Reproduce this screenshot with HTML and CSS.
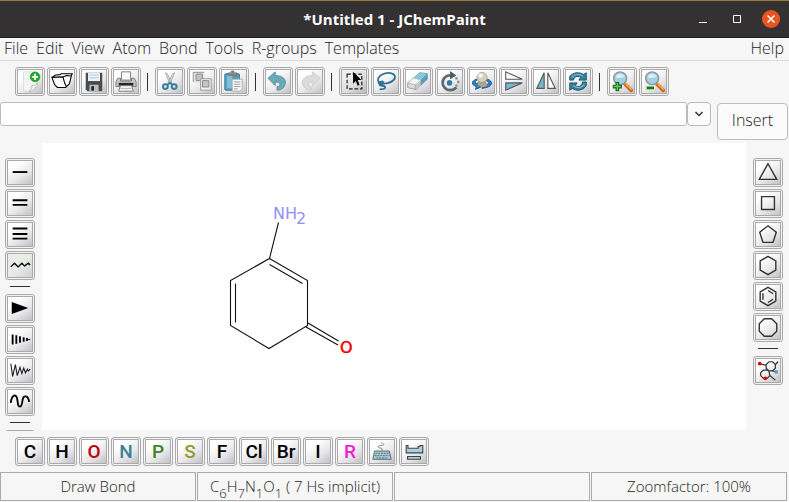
FILE: index.html
```
<!DOCTYPE html>
<html lang="en">
<head>
<meta charset="utf-8">
<title>*Untitled 1 - JChemPaint</title>
<link rel="stylesheet" href="styles.css">
</head>
<body>
<header class="titlebar">
  <h1 class="title">*Untitled 1 - JChemPaint</h1>
  <div class="window-controls">
    <button class="win" aria-label="Minimize"><svg width="18" height="18"><path d="M5 12.500h8" stroke="#fff"/></svg></button>
    <button class="win" aria-label="Maximize"><svg width="18" height="18"><path d="M5.500 5.500h7v7h-7z" stroke="#fff" fill="none"/></svg></button>
    <button class="win close" aria-label="Close"><svg width="18" height="18"><path d="M5.500 5.500l7 7m0-7l-7 7" stroke="#fff" stroke-width="1.500"/></svg></button>
  </div>
</header>
<nav class="menubar">
  <button>File</button><button>Edit</button><button>View</button><button>Atom</button><button>Bond</button><button>Tools</button><button>R-groups</button><button>Templates</button><button class="help">Help</button>
</nav>
<div class="toolbar">
  <button class="tool" aria-label="New"><svg viewBox="0 0 26 25"><path d="M6 2h14v16l-5 5H6z" fill="#f4f4f4" stroke="#ddd"/><path d="M21 14v3l-6 6h-3c3-1 3-3 3-6 3 1 5-1 6-3z" fill="#fff" stroke="#999" stroke-width=".7"/><circle cx="18.500" cy="7.500" r="5.300" fill="#1fae1f" stroke="#0d870d" stroke-width=".6"/><path d="M18.500 4.200v6.600M15.200 7.500h6.600" stroke="#fff" stroke-width="2"/></svg></button>
  <button class="tool" aria-label="Open"><svg viewBox="0 0 26 25"><path d="M2 8l4-2.500 5-.500 1-1h12l-1 3-2 8-4 4H8l-3-3L2 8l12-.500 2 7 2 4M14 7.500L18 6l5 .500" fill="#fff" stroke="#000" stroke-width="1.200"/></svg></button>
  <button class="tool" aria-label="Save"><svg viewBox="0 0 26 25"><path d="M4 3h18v20H6l-2-2z" fill="#484b50"/><path d="M6.500 3h13v9h-13z" fill="#eaf2f8"/><path d="M8 5.500h10M8 8.500h10" stroke="#b5c9d8"/><path d="M8 16h10v7H8z" fill="#bbb"/><path d="M10 17.500h3v5h-3z" fill="#26282b"/></svg></button>
  <button class="tool" aria-label="Print"><svg viewBox="0 0 26 25"><path d="M8 2h10v9H8z" fill="#fafafa" stroke="#777"/><path d="M4 9h3v3h12V9h3l2 4v5H2v-5z" fill="#c7c7c7" stroke="#777"/><path d="M5 14h16v3H5z" fill="#252525"/><path d="M7 17h12l2 6H5z" fill="#f7f7f7" stroke="#777"/><path d="M7 20h12" stroke="#aaa"/></svg></button>
  <span class="divider"></span>
  <button class="tool" aria-label="Cut"><svg viewBox="0 0 26 25"><path d="M8 3l2 1 5 10-2 1zM18 3l-2 1-5 10 2 1z" fill="#e4e4df" stroke="#999b92" stroke-width=".8"/><g fill="none" stroke="#347f9e" stroke-width="2.200"><circle cx="8" cy="18" r="2.600"/><circle cx="17.500" cy="18" r="2.600"/><path d="M10 16l3-2 3 2"/></g></svg></button>
  <button class="tool" aria-label="Copy"><svg viewBox="0 0 26 25"><path d="M4 2h12v12H4z" fill="#e8e8e8"/><path d="M3.500 13V2.500H15" fill="none" stroke="#888"/><path d="M6.500 4.500h7v7h-7z" fill="#c4c4c4" stroke="#888"/><path d="M11.500 9.500H23V22H11.500z" fill="#eee" stroke="#999"/><path d="M13.500 11.500h7v7h-7z" fill="#c4c4c4" stroke="#888"/></svg></button>
  <button class="tool" aria-label="Paste"><svg viewBox="0 0 26 25"><rect x="3" y="4" width="16" height="18" rx="1" fill="#559bbb" stroke="#377b9c"/><path d="M5 6h6v14H5z" fill="#83bed8"/><path d="M7 6V3h3V1h3v2h3v3z" fill="#8d8982" stroke="#666" stroke-width=".6"/><path d="M11 10h11v10l-3 3h-8z" fill="#f8f8f8" stroke="#aaa"/><path d="M13 13h7M13 15.500h7M13 18h7M13 20.500h4" stroke="#999"/></svg></button>
  <span class="divider"></span>
  <button class="tool" aria-label="Undo"><svg viewBox="0 0 26 25"><path d="M2 9l8-7v4c8 0 12 4 11 9-1 4-4 7-9 7v-4c4 0 5-5-2-5v4z" fill="#66abb9" stroke="#648c94"/></svg></button>
  <button class="tool" aria-label="Redo"><svg viewBox="0 0 26 25"><path d="M24 9l-8-7v4c-8 0-12 4-11 9 1 4 4 7 9 7v-4c-4 0-5-5 2-5v4z" fill="#dcdcdc" stroke="#ccc"/></svg></button>
  <span class="divider"></span>
  <button class="tool active" aria-label="Select"><svg viewBox="0 0 26 25"><path d="M5.500 4.500h16v16h-16z" fill="none" stroke="#222" stroke-width="1.300" stroke-dasharray="4 2"/><path d="M12 2v13l3-3 2 5 2-1-2-5h4z" fill="#000"/></svg></button>
  <button class="tool" aria-label="Lasso"><svg viewBox="0 0 26 25"><g fill="none" stroke="#2e7196" stroke-width="2"><ellipse cx="13.500" cy="9" rx="9.500" ry="5.500" transform="rotate(-14 13.500 9)"/><path d="M5 12c-1 3 4 5 5 2 0-3-5-1-4 2 1 2 6 0 6 3 0 2-4 2-6 2"/></g></svg></button>
  <button class="tool" aria-label="Erase"><svg viewBox="0 0 26 25"><path d="M2 14L15 3l8 1v6L11 21l-9-2z" fill="#8fb8ca" stroke="#78909a"/><path d="M2 14l6-5 8 2-6 5z" fill="#f7f7f7"/><path d="M10 16l6-5v6l-5 4z" fill="#c7c9ca"/><path d="M2 14l8 2v5l-8-2z" fill="#dedede" stroke="#999" stroke-width=".6"/><path d="M8 9l7-6 8 1-7 7z" fill="#8cc6dc"/><path d="M16 11l7-7v6l-7 7z" fill="#5f9cb6"/></svg></button>
  <button class="tool" aria-label="Rotate"><svg viewBox="0 0 26 25"><path d="M15 6c-6-1-10 3-10 8 0 4 4 8 8 8 3 0 5-1 7-3" fill="none" stroke="#5e6e70" stroke-width="3"/><path d="M13 1l7 5-7 4z" fill="#4c5e61"/><circle cx="12.500" cy="14" r="3" fill="#337d9c"/><g fill="#899596"><circle cx="20" cy="9" r="1.500"/><circle cx="22" cy="13" r="1.500"/><circle cx="20" cy="17" r="1.500"/></g></svg></button>
  <button class="tool" aria-label="Rotate in 3D"><svg viewBox="0 0 26 25"><path d="M7 10c-6 2-6 6 0 8l-1 3 7-3-4-5-1 2c-3-1-3-3 0-4zM19 10c6 2 6 7-1 9l-5 1 2-4c6 0 7-3 3-4z" fill="#2b83c1" stroke="#164f7d"/><path d="M9 12h8l2 5-6 2-5-3z" fill="#b1a28c"/><circle cx="13" cy="8" r="5.500" fill="#d5cec1" stroke="#9c9383" stroke-width=".7"/><circle cx="11.500" cy="6" r="2.500" fill="#f8f5ed"/></svg></button>
  <button class="tool" aria-label="Flip vertically"><svg viewBox="0 0 26 25"><g stroke="#555" stroke-width="1.200"><path d="M4 2v8h18z" fill="#fff"/><path d="M4 14h18L4 22z" fill="#72bad0"/></g></svg></button>
  <button class="tool" aria-label="Flip horizontally"><svg viewBox="0 0 26 25"><g stroke="#555" stroke-width="1.200"><path d="M11 3v17H3z" fill="#72bad0"/><path d="M15 3v17h8z" fill="#fff"/></g></svg></button>
  <button class="tool" aria-label="Clean up"><svg viewBox="0 0 26 25"><path d="M4 11V7c4-5 11-5 15-2l3-2v8h-8l2-3c-4-2-7-1-8 3zM22 13v4c-4 6-11 6-15 3l-3 2v-8h8l-2 3c4 2 7 1 8-4z" fill="#397f9d" stroke="#185471"/><path d="M6 8c4-4 9-4 12-1M20 16c-4 4-9 4-12 1" fill="none" stroke="#83bacd" stroke-width="1.300"/></svg></button>
  <span class="divider"></span>
  <button class="tool" aria-label="Zoom in"><svg viewBox="0 0 26 25"><path d="M16 15l7 7" stroke="#d65c1d" stroke-width="4" stroke-linecap="round"/><path d="M16.500 14.500l7 7" stroke="#ffc04b" stroke-width="1.500"/><circle cx="11" cy="9" r="7" fill="#a7cfe8" stroke="#8d9396" stroke-width="1.500"/><path d="M6 8c1-5 9-5 10 0-3-1-6 2-10 0z" fill="#dceefa"/><path d="M8 13v10M3 18h10" stroke="#146b18" stroke-width="4"/><path d="M8 14v8M4 18h8" stroke="#68c864" stroke-width="1.500"/></svg></button>
  <button class="tool" aria-label="Zoom out"><svg viewBox="0 0 26 25"><path d="M16 15l7 7" stroke="#d65c1d" stroke-width="4" stroke-linecap="round"/><path d="M16.500 14.500l7 7" stroke="#ffc04b" stroke-width="1.500"/><circle cx="11" cy="9" r="7" fill="#a7cfe8" stroke="#8d9396" stroke-width="1.500"/><path d="M6 8c1-5 9-5 10 0-3-1-6 2-10 0z" fill="#dceefa"/><path d="M4 19.500h10" stroke="#d5f1cf" stroke-width="5"/><path d="M5 19.500h8" stroke="#187a1c" stroke-width="3"/></svg></button>
</div>
<form class="entry">
  <input class="entry-text" type="text" aria-label="Structure">
  <button class="entry-drop" type="button" aria-label="Recent entries"><svg width="10" height="8"><path d="M1.500 2l3.500 3.500 3.500-3.500" fill="none" stroke="#333" stroke-width="1.500"/></svg></button>
  <button class="insert" type="button">Insert</button>
</form>
<main class="work">
  <div class="rail rail-left">
    <button class="tool" aria-label="Single bond"><svg viewBox="0 0 26 25"><path d="M5 12h16" stroke="#000" stroke-width="2"/></svg></button>
    <button class="tool" aria-label="Double bond"><svg viewBox="0 0 26 25"><path d="M5 9h16M5 14h16" stroke="#000" stroke-width="2"/></svg></button>
    <button class="tool" aria-label="Triple bond"><svg viewBox="0 0 26 25"><path d="M5 6h16M5 12h16M5 17h16" stroke="#000" stroke-width="2"/></svg></button>
    <button class="tool any" aria-label="Any bond"><svg viewBox="0 0 26 25"><path d="M3 14l4-4 4 4 4-4 3 3 4-3 2 2" fill="none" stroke="#000" stroke-width="1.500"/></svg></button>
    <span class="rule"></span>
    <button class="tool" aria-label="Wedge bond"><svg viewBox="0 0 26 25"><path d="M4 5.500L22 12 4 18.500z"/></svg></button>
    <button class="tool" aria-label="Hashed bond"><svg viewBox="0 0 26 25"><path d="M5 7v11M9 8v9M13 9v7M17 10v5M20.500 11v3M23 12v1" stroke="#000" stroke-width="2"/></svg></button>
    <button class="tool" aria-label="Undefined wedge"><svg viewBox="0 0 26 25"><path d="M3 5l2 14L8 6l2 12 3-9 2 7 2-6 2 5 2-4 1 2 2-2" fill="none" stroke="#222" stroke-width="1.200"/></svg></button>
    <button class="tool" aria-label="Undefined bond"><svg viewBox="0 0 26 25"><path d="M3 14C4 4 9 4 10 10c1 7 1 8 3 8s2-3 3-8c1-5 6-4 7 3" fill="none" stroke="#000" stroke-width="2"/></svg></button>
    <span class="rule"></span>
    <button class="tool" aria-label="Chain"></button>
  </div>
  <section class="canvas" aria-label="Structure drawing">
    <svg class="molecule" width="360" height="240" viewBox="0 0 360 240">
      <g fill="none" stroke="#111" stroke-width="1.100"><path d="M227.500 115.500l38 22v45l-38.500 23-38.500-23v-45zM227.500 115.500l9-36M193.500 140.500v39M227.500 121.500l33 19M266 180l30.500 18M264 184l32 18"/></g>
      <g class="atoms"><text class="nitrogen" x="231" y="76">NH</text><text class="nitrogen" x="254" y="81">2</text><text class="oxygen" x="298" y="210">O</text></g>
    </svg>
  </section>
  <div class="rail rail-right">
    <button class="tool" aria-label="Triangle"><svg viewBox="0 0 26 25"><path class="ring" d="M13 3l9.500 17h-19z"/></svg></button>
    <button class="tool" aria-label="Square"><svg viewBox="0 0 26 25"><path class="ring" d="M6 5h14v14H6z"/></svg></button>
    <button class="tool" aria-label="Pentagon"><svg viewBox="0 0 26 25"><path class="ring" d="M13 3l9 7-3.500 11h-11L4 10z"/></svg></button>
    <button class="tool" aria-label="Hexagon"><svg viewBox="0 0 26 25"><path class="ring" d="M13 2.500l8.500 5v10l-8.500 5-8.500-5v-10z"/></svg></button>
    <button class="tool" aria-label="Benzene"><svg viewBox="0 0 26 25"><path class="ring" d="M13 2.500l8.500 5v10l-8.500 5-8.500-5v-10zM7.500 9v7M13 6l5.500 3.500M13 19l5.500-3.500"/></svg></button>
    <button class="tool" aria-label="Octagon"><svg viewBox="0 0 26 25"><path class="ring" d="M9 3h8l5.500 5.500v8L17 22H9l-5.500-5.500v-8z"/></svg></button>
    <span class="rule"></span>
    <button class="tool" aria-label="Templates"><svg viewBox="0 0 26 25"><path d="M11 6l3-3h4l3 3v4l-3 3h-4l-3-3zM21 6l3-3M11 7L4 5M14 13l1 5-3 3H8l-3-3v-3l3-3h4l2 1M18 13l4 1M15 18l6 5" fill="none" stroke="#333" stroke-width="1.300"/><circle cx="4" cy="5" r="2" fill="#d00"/><circle cx="10" cy="21" r="2" fill="#d00"/><circle cx="22" cy="14" r="2" fill="#5aa0bd"/></svg></button>
  </div>
</main>
<div class="elements">
  <button class="tool">C</button><button class="tool">H</button><button class="tool red">O</button><button class="tool teal">N</button><button class="tool green">P</button><button class="tool olive">S</button><button class="tool">F</button><button class="tool">Cl</button><button class="tool">Br</button><button class="tool">I</button><button class="tool magenta">R</button>
  <button class="tool" aria-label="Enter element"><svg viewBox="0 0 26 25"><path d="M13 12V9c-5 0-6-3-1-3 4 0 4-2 0-3" fill="none" stroke="#888"/><path d="M5 12h16l2 9H3z" fill="#a5cbd7" stroke="#56666d"/><path d="M6 14.500h14M5 17h16M7 19.500h12" stroke="#56666d" stroke-dasharray="2 1"/></svg></button>
  <button class="tool" aria-label="Periodic table"><svg viewBox="0 0 26 25"><path d="M4.500 6h2v3h11V7h2V6h3v8h-18zM6 18h14v3H6z" fill="#a9d0dc" stroke="#444" stroke-width="1.200"/></svg></button>
</div>
<footer class="status">
  <div>Draw Bond</div><div class="formula">C<sub>6</sub>H<sub>7</sub>N<sub>1</sub>O<sub>1</sub> ( 7 Hs implicit)</div><div></div><div>Zoomfactor: 100%</div>
</footer>
</body>
</html>
```
FILE: styles.css
```
* { box-sizing: border-box; }
body {
  margin: 0;
  height: 100vh;
  display: flex;
  flex-direction: column;
  background: #f6f6f6;
  color: #222;
  font: 300 15px "Open Sans", "Noto Sans", sans-serif;
  overflow: hidden;
}
button { font: inherit; color: inherit; padding: 0; border: 0; background: none; }
svg { display: block; }
.titlebar {
  display: grid;
  grid-template-columns: 1fr auto 1fr;
  align-items: center;
  flex: none;
  height: 38px;
  border-top: 1px solid #987b3b;
  border-bottom: 1px solid #1e1d1d;
  background: #333131;
  color: #fff;
}
.title { grid-column: 2; margin: 0; font: 700 15px "Open Sans", sans-serif; }
.window-controls { display: flex; justify-content: flex-end; gap: 16px; padding-right: 9px; }
.win { width: 18px; height: 18px; border-radius: 50%; }
.close { background: #e95420; }
.menubar {
  display: flex;
  align-items: center;
  gap: 8px;
  flex: none;
  height: 23px;
  padding: 0 5px 2px 4px;
  border-bottom: 1px solid #dcdcdc;
  font-size: 16px;
  line-height: 20px;
}
.help { margin-left: auto; }
.toolbar, .elements { display: flex; gap: 2px; flex: none; height: 41px; padding: 6px 0 0 15px; }
.tool {
  display: block;
  flex: none;
  width: 30px;
  height: 29px;
  padding: 1px;
  border: 1px solid #aaa;
  border-radius: 3px;
  background: linear-gradient(145deg, #fff 25%, #e9e9eb 60%, #bdbdc2) content-box, #f2f2f2;
  font: 500 19px "Roboto", sans-serif;
  line-height: 25px;
  text-align: center;
  color: #000;
}
.tool svg { width: 26px; height: 25px; border: 1px solid #aaa; }
.elements .tool { box-shadow: inset 0 0 0 1px #f6f6f6, inset 0 0 0 2px #aaa; }
.active { background: linear-gradient(145deg, #eee 25%, #ddd 60%, #b8b8bc) content-box, #eee; }
.any { background: linear-gradient(135deg, #f3e9f0, #e6eee4 50%, #d3cbd9) content-box, #f2f2f2; }
.divider { width: 10px; height: 18px; margin-top: 6px; background: linear-gradient(#333, #333) 4px 0 / 1px 100% no-repeat; }
.entry { display: flex; align-items: flex-start; flex: none; height: 41px; padding-right: 1px; }
.entry-text { flex: 1; min-width: 0; height: 24px; border: 1px solid #bbb; border-radius: 3px; background: #fff; padding: 0 6px; font: inherit; }
.entry-drop { display: grid; place-items: center; width: 24px; height: 24px; border: 1px solid #bbb; border-radius: 4px; background: #fbfbfb; }
.insert { width: 71px; height: 37px; margin: 1px 0 0 6px; padding-bottom: 3px; border: 1px solid #bbb; border-radius: 4px; background: #fbfbfb; font-size: 16px; }
.work { display: flex; flex: 1; min-height: 0; overflow: hidden; }
.rail { display: flex; flex-direction: column; gap: 2px; flex: none; padding-top: 15px; }
.rail-left { width: 42px; padding-left: 5px; }
.rail-right { width: 43px; padding-left: 7px; }
.rule { flex: none; width: 20px; height: 10px; margin-left: 5px; background: linear-gradient(#333, #333) 0 4px / 100% 1px no-repeat; }
.canvas { flex: 1; min-width: 0; margin-bottom: 1px; background: #fff; overflow: hidden; }
.atoms { font: 400 16px "DejaVu Sans", sans-serif; }
.nitrogen { fill: #8f8fff; }
.oxygen { fill: #f00000; stroke: #f00000; stroke-width: 0.5; }
.ring { fill: none; stroke: #333; stroke-width: 1.5; }
.red { color: #c00000; }
.teal { color: #3e7f96; }
.green { color: #438522; }
.olive { color: #929b2b; }
.magenta { color: #f31bd4; }
.status { display: flex; gap: 1px; flex: none; height: 30px; padding: 0 2px 1px 0; }
.status div { flex: 1; min-width: 0; border: 1px solid #aaa; line-height: 27px; text-align: center; white-space: nowrap; }
.formula sub { font-size: 13px; line-height: 0; vertical-align: -6px; }
```
